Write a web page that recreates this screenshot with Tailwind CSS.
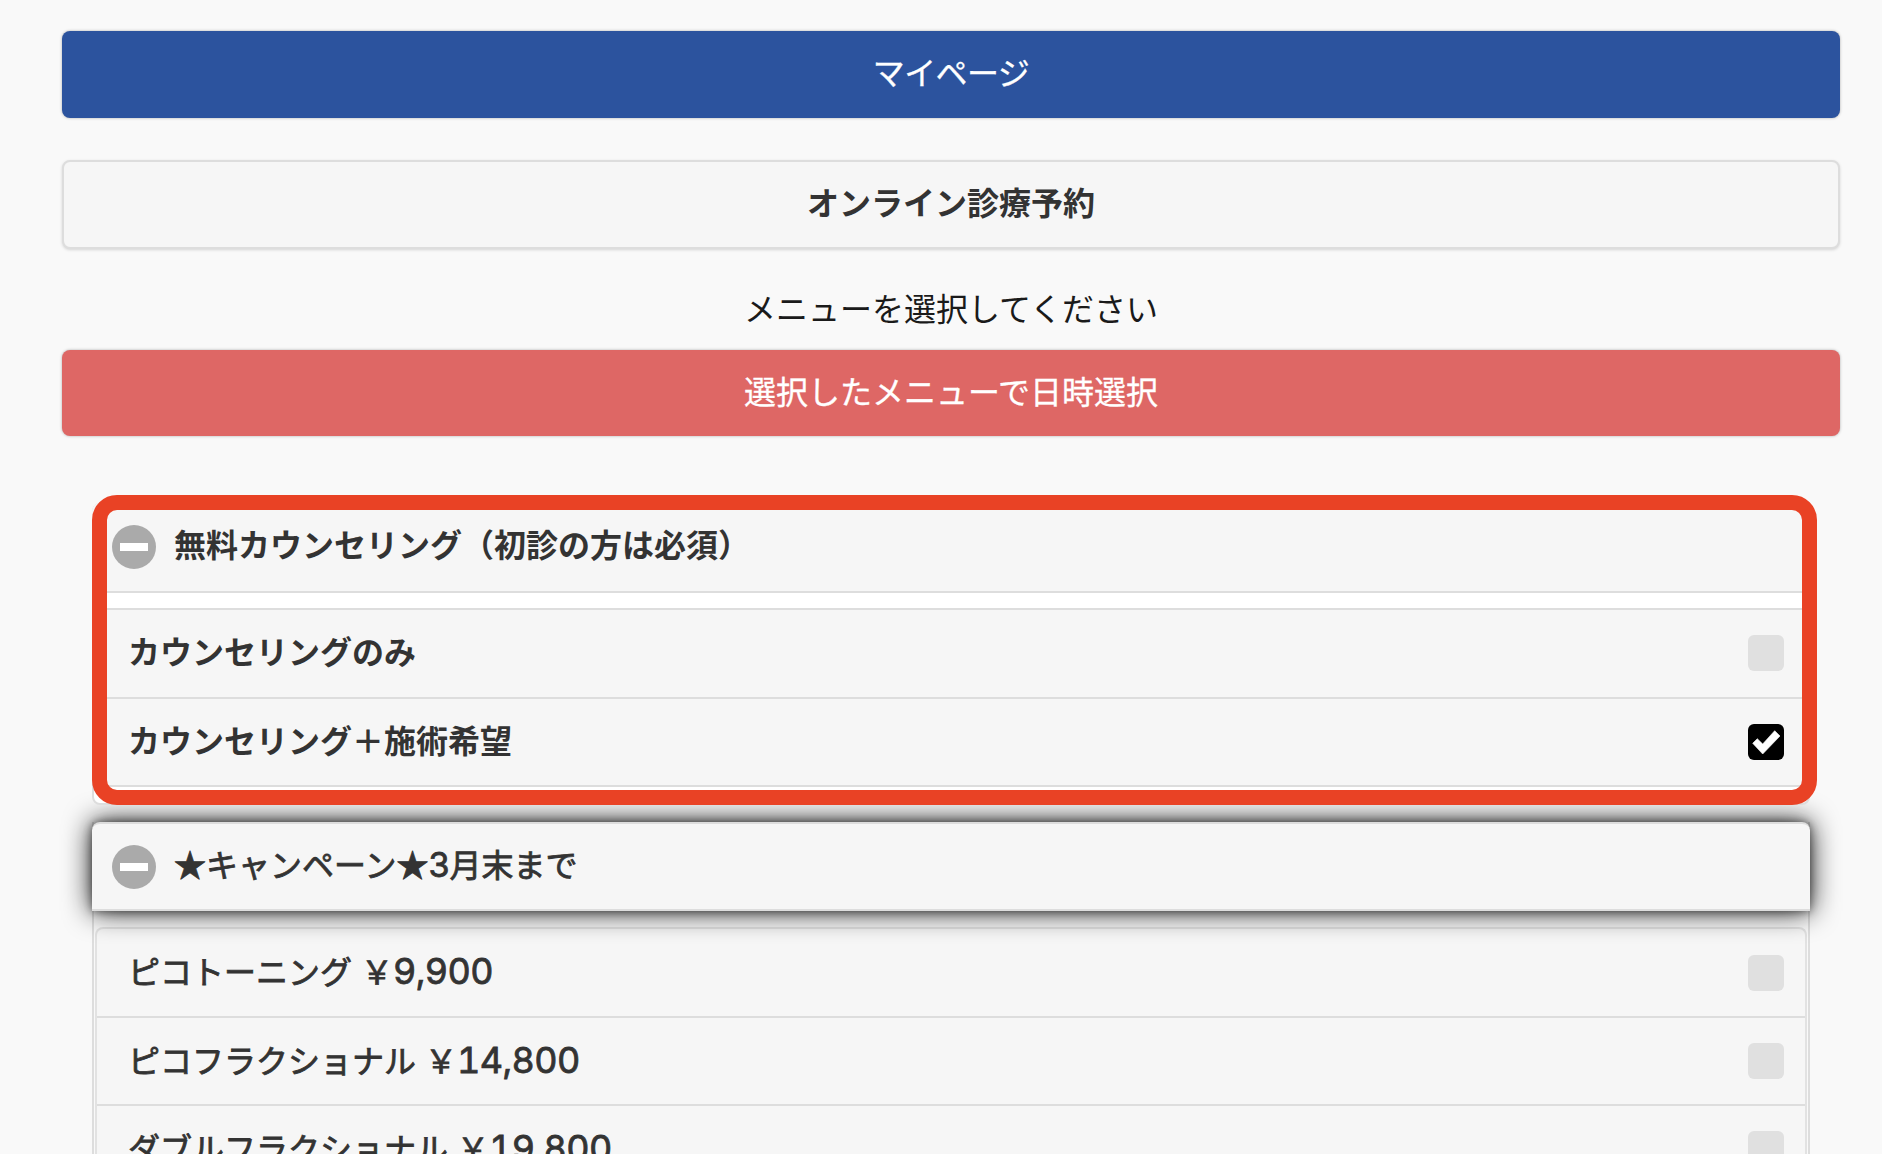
<!DOCTYPE html>
<html lang="ja">
  <head>
    <meta charset="UTF-8" />
    <title>オンライン診療予約</title>
    <script src="https://cdn.jsdelivr.net/npm/@tailwindcss/browser@4"></script>
  </head>
  <body class="bg-[#f9f9f9]">
    <div class="h-[1154px] overflow-hidden bg-[#f9f9f9] pt-[31px] pr-[42px] pl-[62px] text-[32px] text-[#333] font-['Liberation_Sans','Noto_Sans_CJK_JP',sans-serif]">
      <a class="flex h-[87px] items-center justify-center rounded-lg bg-[#2c539e] pb-[2px] tracking-[-0.6px] text-white shadow-[0_0_3px_rgba(0,0,0,.3)] [-webkit-text-stroke:0.3px_#fff]">マイページ</a>
      <a class="mt-[42px] flex h-[89px] items-center justify-center rounded-lg border-2 border-[#ddd] bg-[#f6f6f6] pb-[1px] font-bold shadow-[0_1px_3px_rgba(0,0,0,.15)]">オンライン診療予約</a>
      <p class="mt-[39px] flex h-[44px] items-center justify-center text-[#1a1a1a]">メニューを選択してください</p>
      <a class="mt-[18px] flex h-[86px] items-center justify-center rounded-lg bg-[#de6765] text-white shadow-[0_0_3px_rgba(0,0,0,.3)] [-webkit-text-stroke:0.3px_#fff]">選択したメニューで日時選択</a>

      <!-- group 1 -->
      <section class="relative z-10 mx-[30px] mt-[67px] h-[302px] rounded-lg border-2 border-[#ddd] bg-white">
        <div class="-m-[2px] flex h-[90px] items-center gap-[18px] rounded-t-lg border-b-2 border-[#ddd] bg-[#f6f6f6] pl-[20px] font-bold">
          <span class="flex h-[44px] w-[44px] shrink-0 items-center justify-center rounded-full bg-[#aaa]"><span class="h-[8px] w-[28px] bg-white"></span></span>
          <span class="-mt-[2px]">無料カウンセリング（初診の方は必須）</span>
        </div>
        <div class="mt-[17px] border-t-2 border-[#ddd] bg-[#f6f6f6] font-bold">
          <div class="flex h-[89px] items-center justify-between border-b-2 border-[#ddd] pr-[24px] pl-[34px]">
            <span class="-mt-[1px]">カウンセリングのみ</span>
            <span class="-mt-[1px] h-[36px] w-[36px] rounded-md bg-[#e0e0e0]"></span>
          </div>
          <div class="flex h-[88px] items-center justify-between border-b-2 border-[#ddd] pr-[24px] pl-[34px]">
            <span class="-mt-[1px]">カウンセリング＋施術希望</span>
            <span class="h-[36px] w-[36px] rounded-md bg-black">
              <svg viewBox="0 0 36 36" class="h-[36px] w-[36px]"><polygon fill="#fff" stroke="#fff" stroke-width="0.6" points="4.7,19.3 9.3,14.7 14.7,20 26.7,6.7 32,12 14.7,30"/></svg>
            </span>
          </div>
        </div>
        <!-- red annotation drawn over the screenshot -->
        <div class="pointer-events-none absolute -top-[10px] -right-[9px] -left-[2px] h-[310px] rounded-[25px] border-[15px] border-[#e94225]"></div>
      </section>

      <!-- group 2 -->
      <section class="relative mx-[30px] mt-[17px] border-x-2 border-[#ddd]">
        <div class="relative -mx-[2px] flex h-[89px] items-center gap-[18px] rounded-t-lg border-y-2 border-[#ddd] bg-[#f6f6f6] pl-[20px] shadow-[0_0_28px_rgba(0,0,0,.95),0_0_8px_rgba(0,0,0,.45)] [-webkit-text-stroke:0.8px_#333]">
          <span class="flex h-[44px] w-[44px] shrink-0 items-center justify-center rounded-full bg-[#aaa]"><span class="h-[8px] w-[28px] bg-white"></span></span>
          <span class="-mt-[5px]">★キャンペーン★<span class="font-['Inter'] text-[34px]">3</span>月末まで</span>
        </div>
        <div class="mx-[1px] mt-[16px] rounded-t-lg border-x-2 border-t-2 border-[#e2e2e2] bg-[#f6f6f6] [-webkit-text-stroke:0.8px_#333]">
          <div class="flex h-[89px] items-center justify-between border-b-2 border-[#ddd] pr-[21px] pl-[31px]">
            <span class="-mt-[3px]">ピコトーニング ￥<span class="font-['Inter'] text-[36px] tracking-[-0.6px] tabular-nums">9,900</span></span>
            <span class="h-[36px] w-[36px] rounded-md bg-[#e0e0e0]"></span>
          </div>
          <div class="flex h-[88px] items-center justify-between border-b-2 border-[#ddd] pr-[21px] pl-[31px]">
            <span class="-mt-[3px]">ピコフラクショナル ￥<span class="font-['Inter'] text-[36px] tracking-[-0.6px] tabular-nums">14,800</span></span>
            <span class="h-[36px] w-[36px] rounded-md bg-[#e0e0e0]"></span>
          </div>
          <div class="flex h-[88px] items-center justify-between border-b-2 border-[#ddd] pr-[21px] pl-[31px]">
            <span class="-mt-[3px]">ダブルフラクショナル ￥<span class="font-['Inter'] text-[36px] tracking-[-0.6px] tabular-nums">19,800</span></span>
            <span class="h-[36px] w-[36px] rounded-md bg-[#e0e0e0]"></span>
          </div>
        </div>
      </section>
    </div>
  </body>
</html>
